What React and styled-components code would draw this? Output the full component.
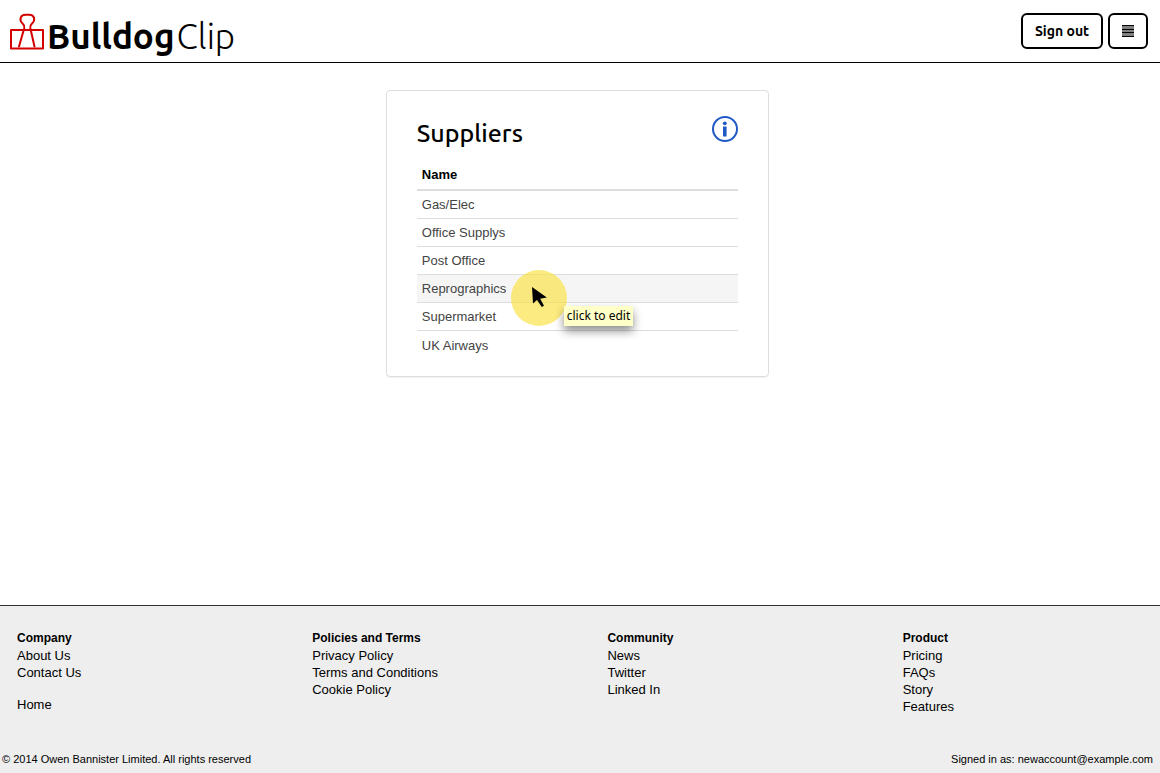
import React from "react";
import styled, { createGlobalStyle } from "styled-components";

const GlobalStyle = createGlobalStyle`
  *, *::before, *::after { box-sizing: border-box; }
  body {
    margin: 0;
    background: #fff;
    color: #000;
    font: 13px/17px "Liberation Sans", Arial, sans-serif;
  }
`;

const brandFont = `Ubuntu, "Noto Sans", "Open Sans", sans-serif`;

const Page = styled.div`
  display: flex;
  flex-direction: column;
  min-height: 100vh;
`;

const Header = styled.header`
  display: flex;
  align-items: flex-start;
  justify-content: space-between;
  height: 63px;
  padding: 13px 12px 0 10px;
  border-bottom: 1px solid #000;
`;

const Brand = styled.a`
  display: flex;
  align-items: flex-start;
  gap: 3px;
  color: #000;
  text-decoration: none;
`;

const ClipLogo = styled.svg`
  width: 34px;
  height: 37px;
  fill: none;
  stroke: #d40000;
  stroke-width: 2;
  stroke-linejoin: round;
  stroke-linecap: round;
`;

const BrandName = styled.span`
  display: flex;
  gap: 2px;
  padding-top: 5px;
  font-family: ${brandFont};
  font-size: 35px;
  line-height: 37px;
  font-weight: 300;
`;

const BrandStrong = styled.strong`
  font-weight: 600;
`;

const Actions = styled.nav`
  display: flex;
  gap: 5px;
`;

const Button = styled.button`
  display: flex;
  align-items: center;
  justify-content: center;
  height: 36px;
  width: ${(p) => (p.$icon ? "40px" : "82px")};
  padding: 0;
  border: 2px solid #000;
  border-radius: 6px;
  background: #fff;
  color: #000;
  font: 600 14px/18px ${brandFont};
  cursor: pointer;
`;

const Main = styled.main`
  flex: 1;
  display: flex;
  justify-content: center;
  align-items: flex-start;
  padding: 27px 5px 27px 0;
`;

const Card = styled.section`
  width: 33.2%;
  min-width: 300px;
  padding: 25px 30px 17px;
  border: 1px solid #dedede;
  border-radius: 4px;
  box-shadow: 0 1px 1px rgba(0, 0, 0, 0.06);
`;

const CardHead = styled.div`
  display: flex;
  justify-content: space-between;
  align-items: flex-start;
  height: 44px;
`;

const Title = styled.h1`
  margin: 0;
  font: 500 25px/34px ${brandFont};
`;

const InfoButton = styled.button`
  padding: 0;
  border: 0;
  background: none;
  cursor: pointer;
  svg { display: block; }
`;

const Table = styled.table`
  width: 100%;
  border-collapse: separate;
  border-spacing: 0;
`;

const HeadCell = styled.th`
  height: 31px;
  padding: 0 5px;
  border-bottom: 2px solid #ddd;
  text-align: left;
`;

const Row = styled.tr`
  background: ${(p) => (p.$active ? "#f5f5f5" : "transparent")};
  cursor: pointer;
  &:last-child td { border-bottom: 0; }
`;

const Cell = styled.td`
  position: relative;
  height: 28px;
  padding: 0 5px;
  border-bottom: 1px solid #ddd;
  color: #444;
`;

const Highlight = styled.span`
  position: absolute;
  z-index: 1;
  left: 94px;
  top: -5px;
  width: 56px;
  height: 56px;
  border-radius: 50%;
  background: rgba(250, 225, 60, 0.65);
  pointer-events: none;
`;

const Pointer = styled.svg`
  position: absolute;
  left: 21px;
  top: 17px;
  width: 16px;
  height: 22px;
`;

const Tooltip = styled.span`
  position: absolute;
  z-index: 2;
  left: 147px;
  top: 31px;
  padding: 2px 3px 2px 3px;
  background: #ffffc8;
  box-shadow: 0 5px 10px rgba(0, 0, 0, 0.45);
  color: #000;
  font: 12px/16px "Noto Sans", "Open Sans", sans-serif;
  white-space: nowrap;
`;

const Footer = styled.footer`
  border-top: 1px solid #333;
  background: #eee;
  padding-top: 24px;
`;

const Columns = styled.div`
  display: grid;
  grid-template-columns: repeat(3, 25.45%) 1fr;
`;

const Column = styled.section`
  padding-left: 17px;
`;

const ColumnTitle = styled.h2`
  margin: 0;
  font: bold 12px/17px "Liberation Sans", Arial, sans-serif;
`;

const Links = styled.ul`
  margin: 0 0 15px;
  padding: 0;
  list-style: none;
`;

const FooterLink = styled.a`
  color: #000;
  text-decoration: none;
`;

const Legal = styled.div`
  display: flex;
  justify-content: space-between;
  padding: 21px 7px 5px 2px;
  font-size: 11px;
`;

const suppliers = ["Gas/Elec", "Office Supplys", "Post Office", "Reprographics", "Supermarket", "UK Airways"];

const footerColumns = [
  { title: "Company", groups: [["About Us", "Contact Us"], ["Home"]] },
  { title: "Policies and Terms", groups: [["Privacy Policy", "Terms and Conditions", "Cookie Policy"]] },
  { title: "Community", groups: [["News", "Twitter", "Linked In"]] },
  { title: "Product", groups: [["Pricing", "FAQs", "Story", "Features"]] },
];

export default function App() {
  return (
    <Page>
      <GlobalStyle />
      <Header>
        <Brand href="#">
          <ClipLogo viewBox="0 0 34 37" aria-hidden="true">
            <path d="M1 17H33V35.5H1Z" />
            <path d="M9 33.5L14.3 15C14.7 13 14.2 12 12.8 10.8C8.5 7 10.5 1.8 15.5 1.8H19.3C24.3 1.8 26 7 21.8 10.8C20.4 12 20 13 20.3 15L24.5 33.5" />
          </ClipLogo>
          <BrandName><BrandStrong>Bulldog</BrandStrong><span>Clip</span></BrandName>
        </Brand>
        <Actions>
          <Button type="button">Sign out</Button>
          <Button type="button" $icon aria-label="Menu">
            <svg width="12" height="12" viewBox="0 0 12 12" aria-hidden="true">
              <path d="M0 0H12V12H0Z" fill="#808080" />
              <path d="M0 0.5H12M0 4.5H12M0 7.5H12M0 11.5H12" stroke="#000" strokeWidth="1" />
            </svg>
          </Button>
        </Actions>
      </Header>
      <Main>
        <Card>
          <CardHead>
            <Title>Suppliers</Title>
            <InfoButton type="button" aria-label="Information">
              <svg width="26" height="26" viewBox="0 0 26 26" aria-hidden="true">
                <circle cx="13" cy="13" r="12" fill="none" stroke="#2159c5" strokeWidth="2" />
                <circle cx="12.8" cy="7.3" r="1.9" fill="#2159c5" />
                <path d="M11 10.5H14.6V20.5H11Z" fill="#2159c5" />
              </svg>
            </InfoButton>
          </CardHead>
          <Table>
            <thead>
              <tr><HeadCell scope="col">Name</HeadCell></tr>
            </thead>
            <tbody>
              {suppliers.map((name) => {
                const active = name === "Reprographics";
                return (
                  <Row key={name} $active={active}>
                    <Cell>
                      {name}
                      {active && (
                        <>
                          <Highlight>
                            <Pointer viewBox="0 0 16 22" aria-hidden="true">
                              <path d="M0 0L1 16.5L5 13L9.8 20L12 18.8L8.2 11.8L14.8 10.5Z" fill="#000" />
                            </Pointer>
                          </Highlight>
                          <Tooltip role="tooltip">click to edit</Tooltip>
                        </>
                      )}
                    </Cell>
                  </Row>
                );
              })}
            </tbody>
          </Table>
        </Card>
      </Main>
      <Footer>
        <Columns>
          {footerColumns.map(({ title, groups }) => (
            <Column key={title}>
              <ColumnTitle>{title}</ColumnTitle>
              {groups.map((links) => (
                <Links key={links[0]}>
                  {links.map((label) => (
                    <li key={label}><FooterLink href="#">{label}</FooterLink></li>
                  ))}
                </Links>
              ))}
            </Column>
          ))}
        </Columns>
        <Legal>
          <span>© 2014 Owen Bannister Limited. All rights reserved</span>
          <span>Signed in as: newaccount@example.com</span>
        </Legal>
      </Footer>
    </Page>
  );
}
